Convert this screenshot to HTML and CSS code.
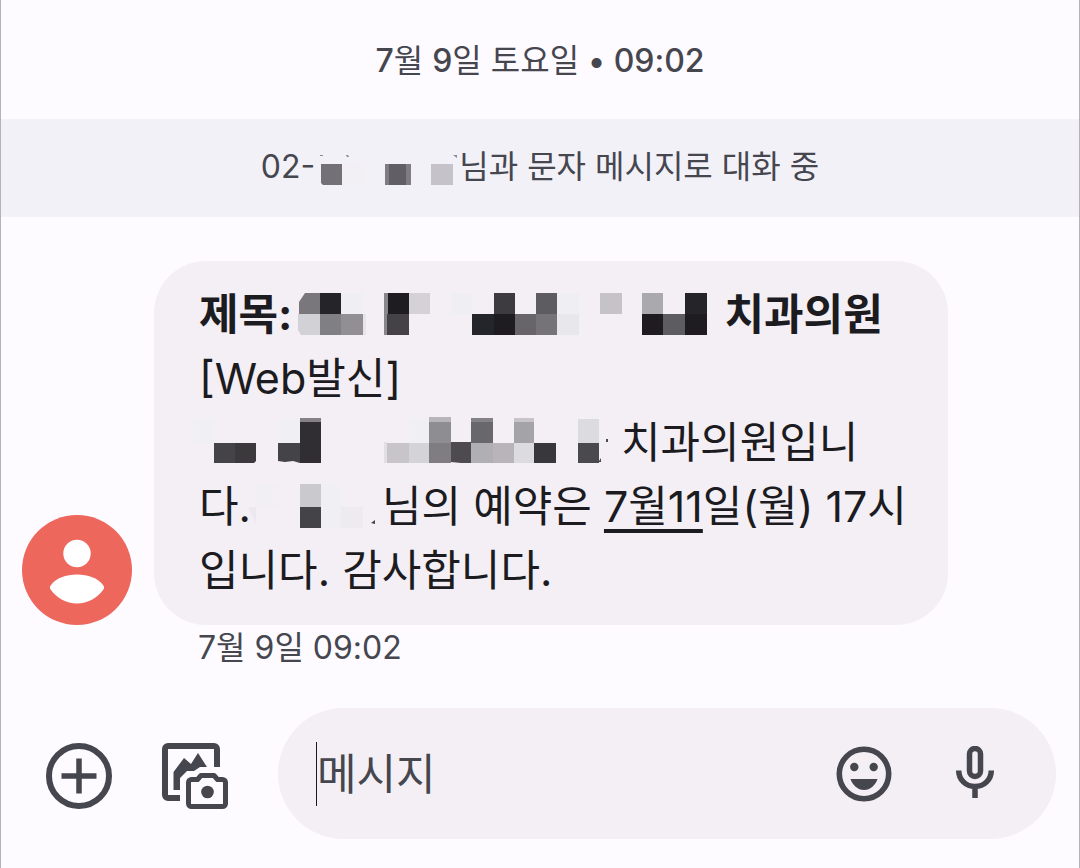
FILE: index.html
```
<!DOCTYPE html>
<html lang="ko">
<head>
<meta charset="UTF-8">
<meta name="viewport" content="width=device-width, initial-scale=1.0">
<title>메시지</title>
<link rel="stylesheet" href="styles.css">
</head>
<body>
<main class="chat">
  <time class="day"><b>7</b>월 <b>9</b>일 토요일 <b>• 09:02</b></time>

  <div class="notice">
    <span>02-</span>
    <svg class="mosaic phone-number" width="140" height="38" viewBox="318 148 140 38" aria-hidden="true">
      <path fill="#8a888e" d="M319 155h3v1h-3zM345 155h2l1 2h-2zM452 155h4v3z"/>
      <path fill="#737177" d="M320 164h21v21h-19l-2-2z"/>
      <path fill="#f2f0f5" d="M341 164h22v21h-22z"/>
      <path fill="#7f7d83" d="M384 164h26v21h-26z"/>
      <path fill="#615f65" d="M388 164h17v21h-17z"/>
      <path fill="#c5c2c9" d="M430 164h22v21h-22z"/>
    </svg>
    <span>님과 문자 메시지로 대화 중</span>
  </div>

  <!-- Received message -->
  <article class="message">
    <svg class="avatar" viewBox="0 0 110 110" aria-hidden="true">
      <circle cx="55" cy="55" r="55" fill="#ee675c"/>
      <circle cx="55" cy="38.500" r="13.700" fill="#fff"/>
      <path fill="#fff" d="M29 70C34 63 44 59.500 55 59.500S76 63 81 70c1.500 2 1.500 3 0 5-6 8-15 13.500-26 13.500S35 83 29 75c-1.500-2-1.500-3 0-5z"/>
    </svg>
    <div class="content">
      <div class="bubble">
        <div class="line subject">
          <span>제목:</span>
          <svg class="mosaic subject-name" width="410" height="44" viewBox="298 292 410 44" aria-hidden="true">
            <path fill="#79777c" d="M305 293h15v21h-21v-12z"/>
            <path fill="#d2d1d5" d="M298 314h22v21h-19l-3-5z"/>
            <path fill="#252428" d="M320 293h21v21h-21zM685 293h22v21h-22z"/>
            <path fill="#efeef2" d="M341 293h21v21h-21zM557 293h22v21h-22zM452 293h20v21h-20z"/>
            <path fill="#807f83" d="M320 314h21v21h-21z"/>
            <path fill="#918f94" d="M341 314h22v21h-22z"/>
            <path fill="#e8e5ea" d="M363 314h3v21h-3z"/>
            <path fill="#88868b" d="M384 293h4v42h-4z"/>
            <path fill="#1e1c20" d="M388 293h21v21h-21zM494 314h21v21h-21zM642 314h21v21h-21zM685 314h22v21h-22z"/>
            <path fill="#444247" d="M387 314h22v21h-22z"/>
            <path fill="#d4d2d6" d="M409 293h21v21h-21z"/>
            <path fill="#24252a" d="M472 314h22v21h-22z"/>
            <path fill="#3d3b40" d="M494 293h21v21h-21z"/>
            <path fill="#67656a" d="M515 314h21v21h-21z"/>
            <path fill="#5d5d61" d="M536 293h21v21h-21zM663 314h22v21h-22z"/>
            <path fill="#757378" d="M536 314h21v21h-21z"/>
            <path fill="#e8e7eb" d="M557 314h22v21h-22z"/>
            <path fill="#c5c3c8" d="M600 293h22v21h-22z"/>
            <path fill="#aaa9ad" d="M642 293h21v21h-21z"/>
          </svg>
          <span>치과의원</span>
        </div>
        <div class="line">[Web발신]</div>
        <div class="line">
          <svg class="mosaic clinic-name" width="416" height="50" viewBox="193 416 416 50" aria-hidden="true">
            <path fill="#f0eff3" d="M193 418h21v24h-21zM279 418h21v24h-21zM409 418h21v24h-21z"/>
            <path fill="#444347" d="M214 442h21v20h-21zM278 442h22v20l-7-2-8 1-7-1z"/>
            <path fill="#3c393d" d="M235 442h21v18l-2 2h-19z"/>
            <path fill="#858287" d="M300 417h21v4h-21zM471 417h22v4h-22z"/>
            <path fill="#302e33" d="M300 421h21v41h-21z"/>
            <path fill="#e2dfe4" d="M384 441h3v21h-3z"/>
            <path fill="#c7c5ca" d="M387 442h22v20h-22zM514 417h20v4h-20z"/>
            <path fill="#d4d3d7" d="M409 442h21v20h-21z"/>
            <path fill="#b8b5ba" d="M429 416h22v5h-22z"/>
            <path fill="#8e8d91" d="M429 421h22v21h-22z"/>
            <path fill="#7f7d82" d="M429 442h22v20h-22z"/>
            <path fill="#4d4b50" d="M451 441h20v21h-10l-10-1z"/>
            <path fill="#68676b" d="M471 421h22v21h-22z"/>
            <path fill="#b0afb3" d="M471 442h22v20h-22z"/>
            <path fill="#b8b4b9" d="M493 442h21v20h-21z"/>
            <path fill="#a4a3a7" d="M514 421h20v21h-20z"/>
            <path fill="#dcdce0" d="M514 442h20v20h-20zM578 418h21v24h-21z"/>
            <path fill="#38373c" d="M534 442h22v20h-22z"/>
            <path fill="#4a494e" d="M578 442h21v20h-21zM606 438h2v3h-2zM599 460l2-3v4h-2z"/>
          </svg>
          <span>치과의원입니</span>
        </div>
        <div class="line">
          <span>다.</span>
          <svg class="mosaic guest-name" width="130" height="46" viewBox="246 484 130 46" aria-hidden="true">
            <path fill="#f1eff3" d="M256 485h23v23h-23z"/>
            <path fill="#cac9cd" d="M300 485h21v23h-21z"/>
            <path fill="#f0eff3" d="M321 485h20v44h-20z"/>
            <path fill="#ece8ed" d="M248 508h8v16z"/>
            <path fill="#444347" d="M300 508h21v21h-21z"/>
            <path fill="#eeebf0" d="M341 508h22v21h-22z"/>
            <path fill="#444347" d="M371 524l4-3v4z"/>
          </svg>
          <span>님의 예약은 <a class="date-link" href="#">7월11</a>일(월) 17시</span>
        </div>
        <div class="line">입니다. 감사합니다.</div>
      </div>
      <time class="stamp">7월 9일 09:02</time>
    </div>
  </article>

  <!-- Message input -->
  <form class="composer">
    <button class="icon-button attach" type="button" aria-label="추가">
      <svg width="66" height="66" viewBox="0 0 66 66" fill="none" stroke="#46464f" aria-hidden="true">
        <circle cx="33" cy="33" r="30" stroke-width="6"/>
        <path stroke-width="5.500" d="M33 15.500v35M15.500 33h35"/>
      </svg>
    </button>
    <button class="icon-button attach" type="button" aria-label="사진">
      <svg width="66" height="66" viewBox="0 0 66 66" fill="none" stroke="#46464f" stroke-width="6" stroke-linejoin="round" aria-hidden="true">
        <path d="M18 55H6a3 3 0 0 1-3-3V6a3 3 0 0 1 3-3h46a3 3 0 0 1 3 3v18"/>
        <path fill="#46464f" stroke="none" d="M11.500 47V29L22 15l7 6 7-11 9 14h-7l-6 4h-7l-7 7v12z"/>
        <path stroke-width="5" d="M29.500 36.500h6l3.500-4h13l3.500 4h5a3 3 0 0 1 3 3v21a3 3 0 0 1-3 3h-31a3 3 0 0 1-3-3v-21a3 3 0 0 1 3-3z"/>
        <circle cx="45.500" cy="49" r="6.300" fill="#46464f" stroke="none"/>
      </svg>
    </button>
    <div class="field">
      <span class="caret"></span>
      <input class="text-input" type="text" placeholder="메시지" aria-label="메시지">
      <button class="icon-button" type="button" aria-label="이모티콘">
        <svg width="56" height="56" viewBox="0 0 56 56" aria-hidden="true">
          <circle cx="28" cy="28" r="24.700" fill="none" stroke="#46464f" stroke-width="5.600"/>
          <circle cx="18.300" cy="21" r="4.200" fill="#46464f"/>
          <circle cx="37.700" cy="21" r="4.200" fill="#46464f"/>
          <path fill="#46464f" d="M14.500 33h27c-2 6-7 11-13.500 11s-11.500-5-13.500-11z"/>
        </svg>
      </button>
      <button class="icon-button" type="button" aria-label="음성">
        <svg width="40" height="56" viewBox="0 0 40 56" fill="none" stroke="#46464f" stroke-width="5.500" aria-hidden="true">
          <rect x="14.500" y="2.500" width="11" height="28" rx="5.500"/>
          <path d="M3.700 24.500c0 9 7 16 16.300 16s16.300-7 16.300-16M20 40v12"/>
        </svg>
      </button>
    </div>
  </form>
</main>
</body>
</html>
```

FILE: styles.css
```
* {
  box-sizing: border-box;
}
body {
  margin: 0;
  background-color: #fdfbff;
  color: #46464f;
  font-family: Inter, "Noto Sans CJK KR", sans-serif;
}
.chat {
  min-height: 100vh;
  border: solid #b5b3b8;
  border-width: 0 1px;
}
.day {
  display: block;
  padding: 37px 0 34px;
  font-size: 32px;
  line-height: 48px;
  text-align: center;
}
.day b {
  font-weight: 500;
}
/* Conversation notice bar */
.notice {
  display: flex;
  justify-content: center;
  align-items: center;
  height: 98px;
  padding-bottom: 2px;
  background-color: #f3f1f8;
  font-size: 32px;
  line-height: 48px;
}
.mosaic {
  flex: none;
}
.phone-number {
  margin-left: 4px;
}
/* Message bubble */
.message {
  display: flex;
  gap: 22px;
  padding: 44px 131px 0 21px;
}
.avatar {
  flex: none;
  align-self: flex-end;
  width: 110px;
  height: 110px;
  margin-bottom: 46px;
}
.content {
  flex: 1;
  min-width: 0;
}
.bubble {
  padding: 21px 45px 23px;
  border-radius: 52px;
  background-color: #f3eff4;
  color: #1c1b1f;
  font-size: 43px;
  line-height: 64px;
}
.line {
  display: flex;
  align-items: center;
  height: 64px;
  white-space: nowrap;
}
.subject {
  font-weight: 700;
}
.subject-name {
  margin: 0 16px 0 6px;
}
.clinic-name {
  margin: 0 12px 0 -6px;
}
.guest-name {
  margin: 0 6px 0 -5px;
}
.date-link {
  color: inherit;
  text-decoration: underline;
  text-decoration-thickness: 4px;
  text-underline-offset: 7px;
}
.stamp {
  display: block;
  padding-left: 44px;
  font-size: 32px;
  line-height: 46px;
}
/* Composer row */
.composer {
  display: flex;
  align-items: center;
  gap: 50px;
  padding: 37px 23px 28px 45px;
}
.icon-button {
  flex: none;
  display: flex;
  padding: 0;
  border: 0;
  background: none;
  cursor: pointer;
}
.attach {
  padding-top: 4px;
}
.field {
  flex: 1;
  min-width: 0;
  display: flex;
  align-items: center;
  height: 131px;
  padding: 0 61px 0 38px;
  border-radius: 66px;
  background-color: #f3eff4;
}
.caret {
  width: 1px;
  height: 64px;
  background-color: #1c1b1f;
}
.text-input {
  flex: 1;
  min-width: 0;
  padding: 0;
  border: 0;
  outline: 0;
  background: none;
  color: #1c1b1f;
  font-family: inherit;
  font-size: 43px;
  line-height: 64px;
}
.text-input::placeholder {
  color: #46464f;
}
.field .icon-button + .icon-button {
  margin-left: 63px;
}
```
